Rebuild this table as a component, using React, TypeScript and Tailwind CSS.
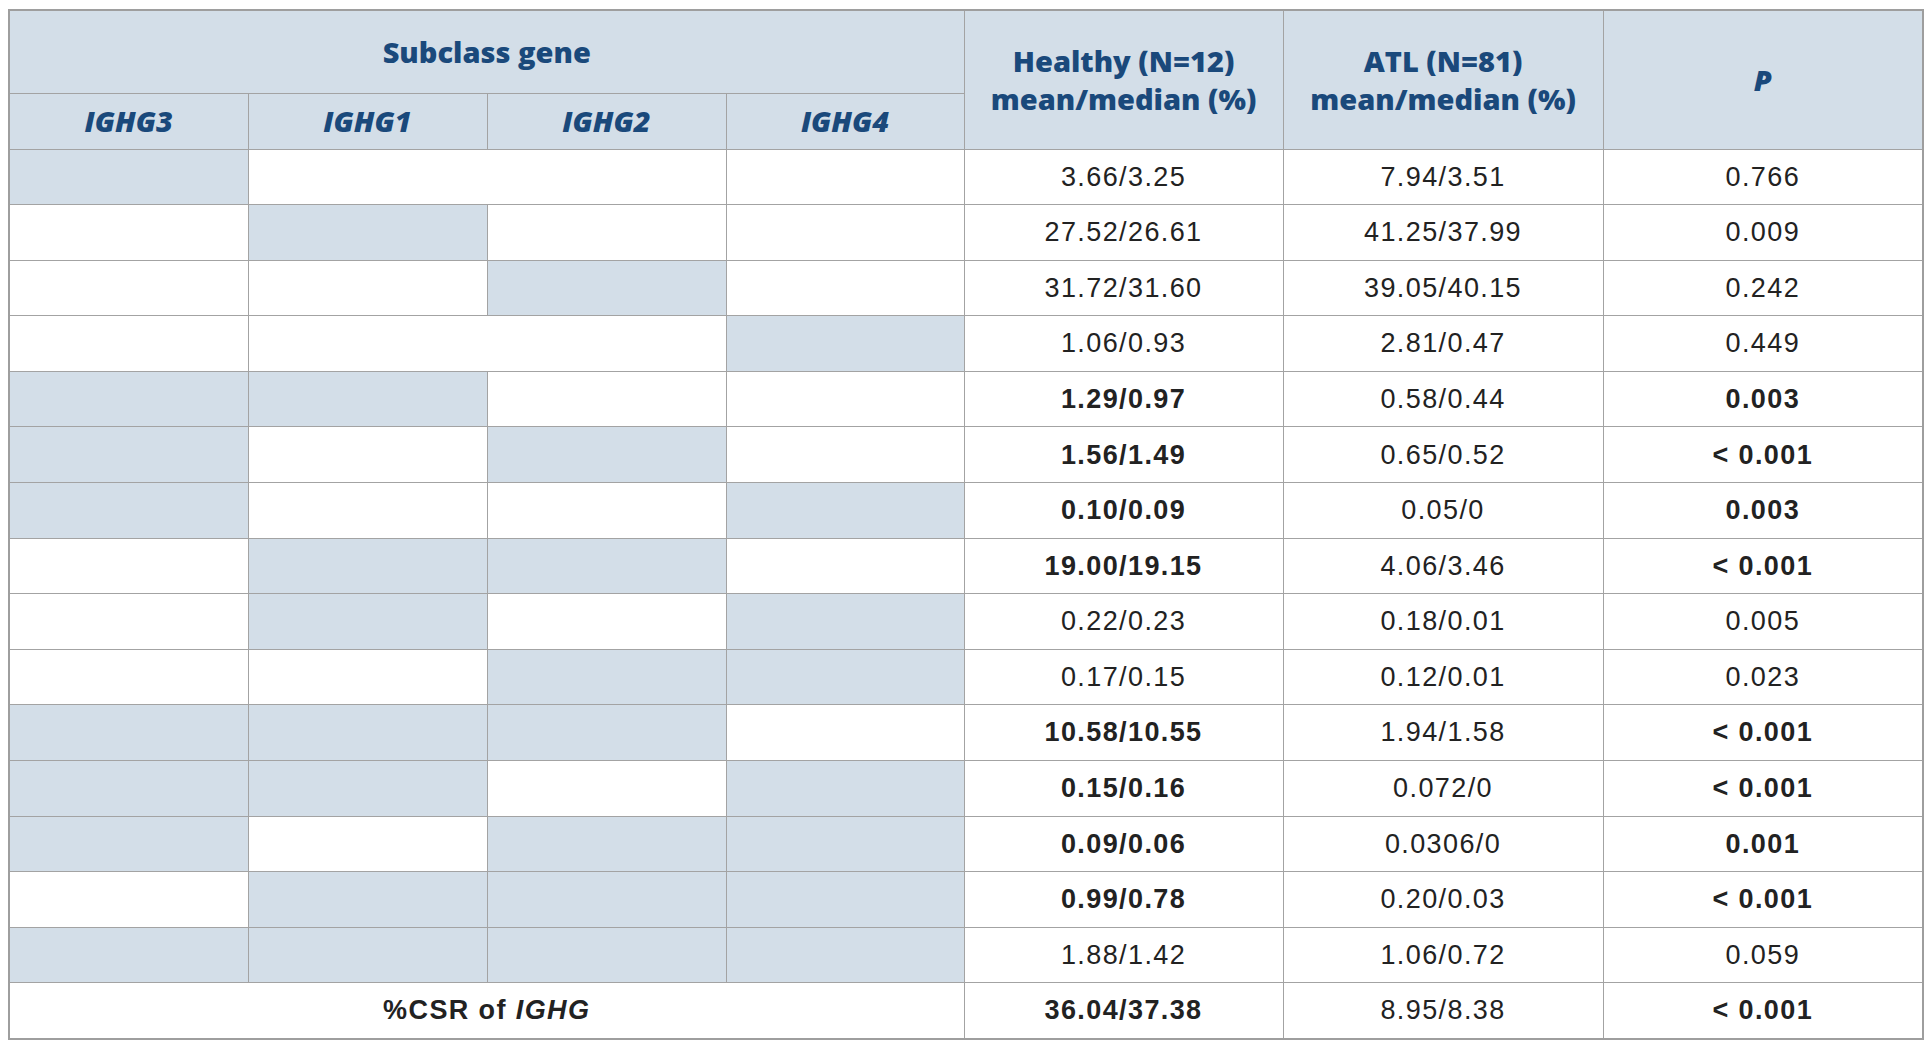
import React from "react";

type Row = {
  pat: [boolean, boolean, boolean, boolean];
  merged?: boolean;
  h: string;
  a: string;
  p: string;
  hb?: boolean;
  pb?: boolean;
};

const rows: Row[] = [
  { pat: [true, false, false, false], merged: true, h: "3.66/3.25", a: "7.94/3.51", p: "0.766" },
  { pat: [false, true, false, false], h: "27.52/26.61", a: "41.25/37.99", p: "0.009" },
  { pat: [false, false, true, false], h: "31.72/31.60", a: "39.05/40.15", p: "0.242" },
  { pat: [false, false, false, true], merged: true, h: "1.06/0.93", a: "2.81/0.47", p: "0.449" },
  { pat: [true, true, false, false], h: "1.29/0.97", a: "0.58/0.44", p: "0.003", hb: true, pb: true },
  { pat: [true, false, true, false], h: "1.56/1.49", a: "0.65/0.52", p: "< 0.001", hb: true, pb: true },
  { pat: [true, false, false, true], h: "0.10/0.09", a: "0.05/0", p: "0.003", hb: true, pb: true },
  { pat: [false, true, true, false], h: "19.00/19.15", a: "4.06/3.46", p: "< 0.001", hb: true, pb: true },
  { pat: [false, true, false, true], h: "0.22/0.23", a: "0.18/0.01", p: "0.005" },
  { pat: [false, false, true, true], h: "0.17/0.15", a: "0.12/0.01", p: "0.023" },
  { pat: [true, true, true, false], h: "10.58/10.55", a: "1.94/1.58", p: "< 0.001", hb: true, pb: true },
  { pat: [true, true, false, true], h: "0.15/0.16", a: "0.072/0", p: "< 0.001", hb: true, pb: true },
  { pat: [true, false, true, true], h: "0.09/0.06", a: "0.0306/0", p: "0.001", hb: true, pb: true },
  { pat: [false, true, true, true], h: "0.99/0.78", a: "0.20/0.03", p: "< 0.001", hb: true, pb: true },
  { pat: [true, true, true, true], h: "1.88/1.42", a: "1.06/0.72", p: "0.059" },
];

const cellB = "border border-[#a3a3a3] p-0";
const hdr =
  "border border-[#a3a3a3] bg-[#d3dee8] text-[#1a497b] font-extrabold text-center align-middle p-0 [font-family:'Open_Sans',sans-serif] text-[29px]";
const num =
  "border border-[#a3a3a3] text-center align-middle p-0 text-[#222222] [font-family:'Liberation_Sans',Arial,sans-serif] text-[27px] tracking-[1.4px]";

export default function App() {
  return (
    <div className="min-h-[1051px] w-[1928px] bg-white pl-[8px] pt-[9px]">
      <table className="w-[1914px] table-fixed border-collapse border-2 border-[#9e9e9e]">
        <colgroup>
          <col className="w-[239px]" />
          <col className="w-[239px]" />
          <col className="w-[239px]" />
          <col className="w-[238px]" />
          <col className="w-[319px]" />
          <col className="w-[320px]" />
          <col className="w-[320px]" />
        </colgroup>
        <thead>
          <tr className="h-[83px]">
            <th colSpan={4} className={hdr}>
              Subclass gene
            </th>
            <th rowSpan={2} className={`${hdr} leading-[38px]`}>
              Healthy (N=12)
              <br />
              mean/median (%)
            </th>
            <th rowSpan={2} className={`${hdr} leading-[38px]`}>
              ATL (N=81)
              <br />
              mean/median (%)
            </th>
            <th rowSpan={2} className={`${hdr} italic`}>
              P
            </th>
          </tr>
          <tr className="h-[56px]">
            <th className={`${hdr} italic`}>IGHG3</th>
            <th className={`${hdr} italic`}>IGHG1</th>
            <th className={`${hdr} italic`}>IGHG2</th>
            <th className={`${hdr} italic`}>IGHG4</th>
          </tr>
        </thead>
        <tbody>
          {rows.map((r, i) => (
            <tr key={i} className="h-[55.6px]">
              {r.merged ? (
                <>
                  <td className={`${cellB} ${r.pat[0] ? "bg-[#d3dee8]" : "bg-white"}`} />
                  <td colSpan={2} className={`${cellB} bg-white`} />
                  <td className={`${cellB} ${r.pat[3] ? "bg-[#d3dee8]" : "bg-white"}`} />
                </>
              ) : (
                r.pat.map((b, j) => (
                  <td key={j} className={`${cellB} ${b ? "bg-[#d3dee8]" : "bg-white"}`} />
                ))
              )}
              <td className={`${num} ${r.hb ? "font-bold" : "font-normal"}`}>{r.h}</td>
              <td className={`${num} font-normal`}>{r.a}</td>
              <td className={`${num} ${r.pb ? "font-bold" : "font-normal"}`}>{r.p}</td>
            </tr>
          ))}
          <tr className="h-[55.6px]">
            <td colSpan={4} className={`${num} font-bold`}>
              %CSR of <span className="italic">IGHG</span>
            </td>
            <td className={`${num} font-bold`}>36.04/37.38</td>
            <td className={`${num} font-normal`}>8.95/8.38</td>
            <td className={`${num} font-bold`}>&lt; 0.001</td>
          </tr>
        </tbody>
      </table>
    </div>
  );
}
